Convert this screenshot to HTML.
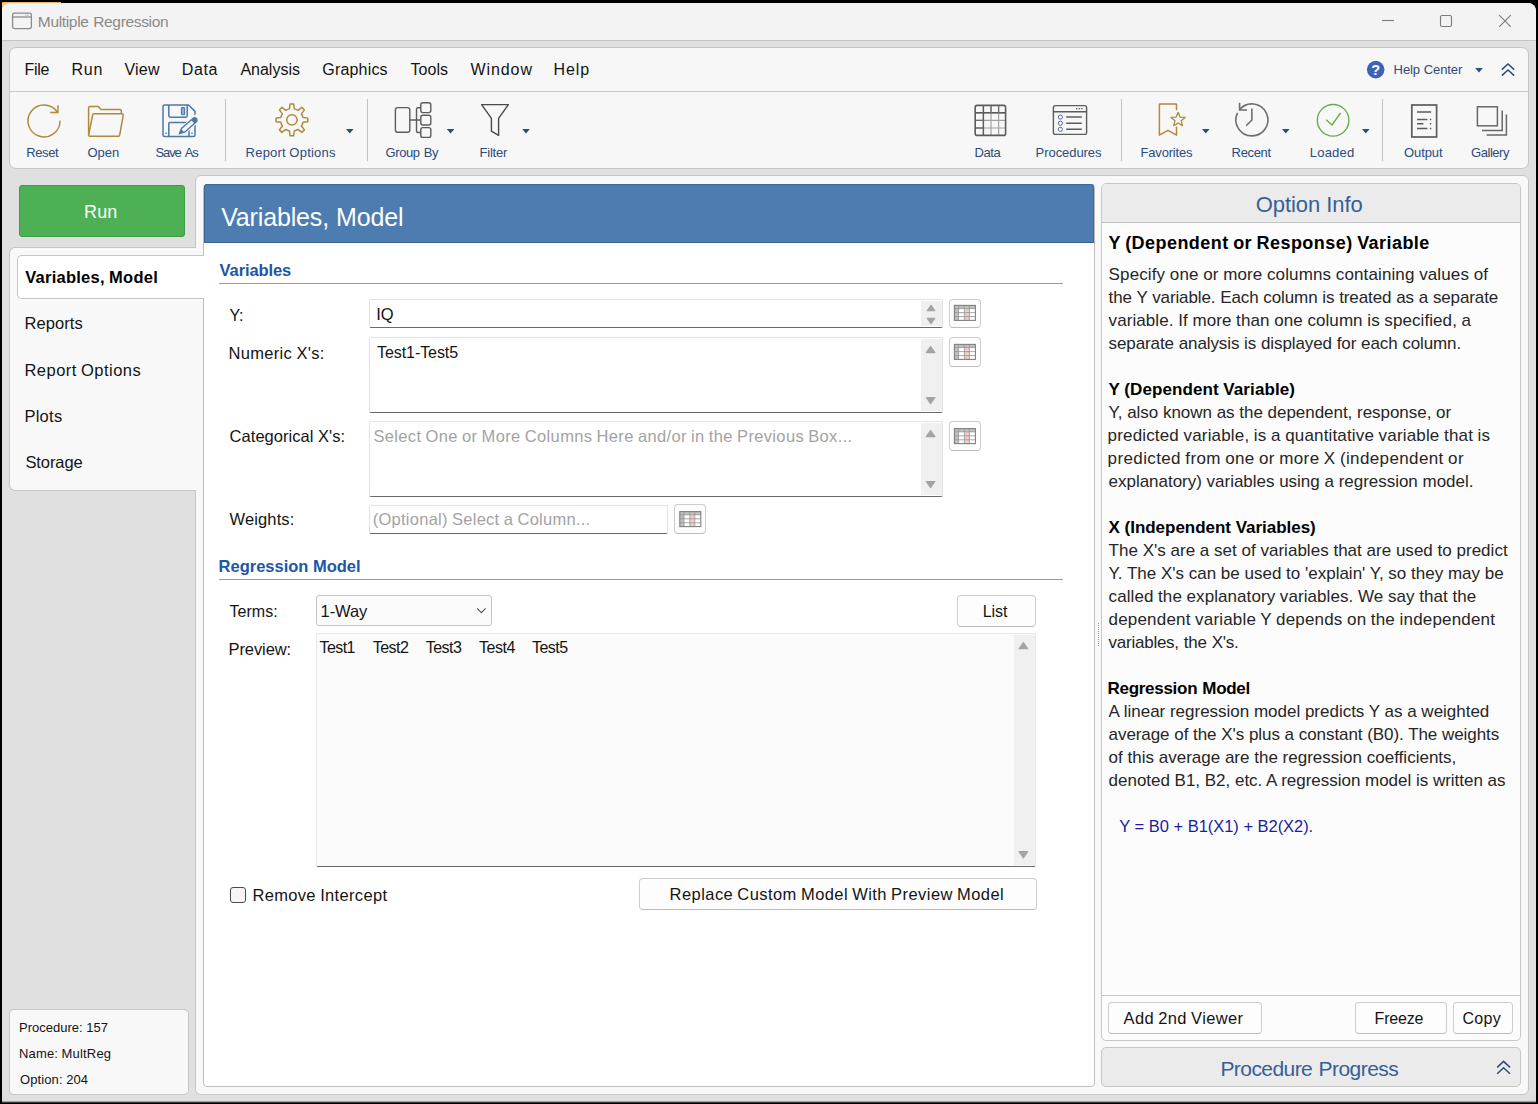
<!DOCTYPE html>
<html lang="en"><head><meta charset="utf-8"><title>Multiple Regression</title>
<style>
html,body{margin:0;padding:0}
body{width:1538px;height:1104px;background:#000;position:relative;overflow:hidden;font-family:"Liberation Sans", Arial, sans-serif}
.a{position:absolute;box-sizing:border-box}
.t{position:absolute;white-space:pre;margin:0;padding:0}

#win{position:absolute;left:2px;top:3px;width:1534px;height:1098px;background:#e0e0e0;border-radius:8px 8px 9px 9px;overflow:hidden}
#pg{position:absolute;left:-2px;top:-3px;width:1538px;height:1104px}
#titlebar{left:2px;top:2px;width:1534px;height:38px;background:#f3f3f3}
#titleline{left:2px;top:40px;width:1534px;height:1px;background:#c4c4c4}
#toolbar{left:9px;top:47px;width:1520px;height:122px;background:#f7f7f7;border:1px solid #c6c6c6;border-radius:7px}
#menusep{left:10px;top:91px;width:1518px;height:1px;background:#c9c9c9}
.vsep{width:1px;top:99px;height:62px;background:#c2c2c2}
#outer{left:195px;top:175px;width:1334px;height:920px;background:#f8f8f8;border:1px solid #c6c6c6;border-radius:6px}
#nav{left:9px;top:247px;width:187px;height:244px;background:#f8f8f8;border:1px solid #c6c6c6;border-right:none;border-radius:6px 0 0 6px}
#navfix{left:195px;top:248px;width:2px;height:242px;background:#f8f8f8}
#run{left:19px;top:185px;width:166px;height:52px;background:#4db054;border-radius:3px;border:1px solid #419a45}
#main{left:203px;top:184px;width:892px;height:903px;background:#fff;border:1px solid #bdbdbd;border-radius:4px}
#mainhead{left:204px;top:184px;width:890px;height:59px;background:#4d7cb0;border-radius:3px 3px 0 0;border:1px solid #3d6796;border-bottom:1px solid #3a628f}
#tab{left:17px;top:255px;width:187px;height:44px;background:#fff;border:1px solid #c6c6c6;border-right:none;border-radius:5px 0 0 5px}
.secline{left:219px;width:844px;height:1px;background:#78a0de}
.tb{background:#fff;border:1px solid #e2e2e2;border-bottom:1px solid #6a6a6a;border-radius:2px}
.sb{background:#f0f0f0}
.btn{background:#fdfdfd;border:1px solid #cdcdcd;border-bottom-color:#bcbcbc;border-radius:4px}
#combo{left:316px;top:595px;width:176px;height:31px;background:#fbfbfb;border:1px solid #c4c4c4;border-radius:3px}
#preview{left:316px;top:633px;width:720px;height:234px;background:#fbfbfb;border:1px solid #e8e8e8;border-bottom:1px solid #6a6a6a;border-radius:2px}
#chk{left:230px;top:887px;width:16px;height:16px;background:#f5f5f5;border:1px solid #4a4a4a;border-radius:3px}
#oinfo{left:1101px;top:183px;width:420px;height:858px;background:#fcfcfc;border:1px solid #c6c6c6;border-radius:5px}
#oinfohead{left:1102px;top:184px;width:418px;height:39px;background:#ebebeb;border-bottom:1px solid #c2c2c2;border-radius:4px 4px 0 0}
#oinfoline{left:1102px;top:995px;width:418px;height:1px;background:#c8c8c8}
#prog{left:1101px;top:1047px;width:420px;height:40px;background:#ebebeb;border:1px solid #c6c6c6;border-radius:5px}
#status{left:9px;top:1009px;width:180px;height:86px;background:#f8f8f8;border:1px solid #c6c6c6;border-radius:5px}
#botstrip{position:absolute;left:2px;top:1101px;width:1534px;height:2px;background:linear-gradient(#a0a0a0 50%,#3a3a3a 50%)}

</style></head>
<body>

<div id="botstrip"></div>
<div class="a" style="left:2px;top:1088px;width:1534px;height:13px;background:#dcdcdc"></div>
<div class="a" style="left:2px;top:2px;width:9px;height:9px;background:#f2c578"></div><div class="a" style="left:2px;top:2px;width:59px;height:1px;background:#e9b060"></div>
<div id="win"><div id="pg">
<div class="a" id="titlebar"></div>
<div class="a" id="titleline"></div>
<div class="a" id="toolbar"></div>
<div class="a" id="menusep"></div>
<div class="a vsep" style="left:225px"></div>
<div class="a vsep" style="left:367px"></div>
<div class="a vsep" style="left:1121px"></div>
<div class="a vsep" style="left:1382px"></div>
<div class="a" id="outer"></div>
<div class="a" id="nav"></div>
<div class="a" id="navfix"></div>
<div class="a" id="run"></div>
<div class="a" id="main"></div>
<div class="a" id="mainhead"></div>
<div class="a" id="tab"></div>
<div class="a secline" style="top:283px"></div>
<div class="a secline" style="top:579px"></div>

<div class="a tb" style="left:369px;top:299px;width:574px;height:29px"></div>
<div class="a sb" style="left:921px;top:301px;width:21px;height:25px"></div>
<div class="a tb" style="left:369px;top:337px;width:574px;height:76px"></div>
<div class="a sb" style="left:921px;top:339px;width:21px;height:72px"></div>
<div class="a tb" style="left:369px;top:421px;width:574px;height:76px"></div>
<div class="a sb" style="left:921px;top:423px;width:21px;height:72px"></div>
<div class="a tb" style="left:369px;top:505px;width:299px;height:29px"></div>
<div class="a btn" style="left:949px;top:299px;width:32px;height:29px"></div>
<div class="a btn" style="left:949px;top:337px;width:32px;height:30px"></div>
<div class="a btn" style="left:949px;top:421px;width:32px;height:30px"></div>
<div class="a btn" style="left:674px;top:504px;width:32px;height:30px"></div>
<div class="a" id="combo"></div>
<div class="a btn" style="left:957px;top:595px;width:79px;height:32px"></div>
<div class="a" id="preview"></div>
<div class="a sb" style="left:1014px;top:635px;width:21px;height:230px"></div>
<div class="a" id="chk"></div>
<div class="a btn" style="left:639px;top:878px;width:398px;height:32px"></div>

<div class="a" id="oinfo"></div>
<div class="a" id="oinfohead"></div>
<div class="a" id="oinfoline"></div>
<div class="a btn" style="left:1108px;top:1002px;width:154px;height:32px"></div>
<div class="a btn" style="left:1355px;top:1002px;width:92px;height:32px"></div>
<div class="a btn" style="left:1453px;top:1002px;width:60px;height:32px"></div>
<div class="a" id="prog"></div>
<div class="a" id="status"></div>
</div></div>

<svg class="a" style="left:0;top:0" width="1538" height="1104" viewBox="0 0 1538 1104">
<g fill="none" stroke="#8b8b8b" stroke-width="1.3"><rect x="12.6" y="13.2" width="18.8" height="15.4" rx="1.8"/><path d="M12.6 17H31.4"/></g>
<path d="M25.2 15.1h3.6" stroke="#9a9a9a" stroke-width="1" stroke-dasharray="1 0.6"/>
<g fill="none" stroke="#7c7c7c" stroke-width="1.1"><path d="M1382 20.5H1394"/><rect x="1440.5" y="15.5" width="11" height="11" rx="1.6"/><path d="M1499.2 15.2L1510.8 26.8M1510.8 15.2L1499.2 26.8"/></g>
<circle cx="1375.7" cy="69.6" r="8.8" fill="#3f63b4"/>
<path d="M1475.2 68h7.6l-3.8 4.4z" fill="#2c4a7c"/>
<path d="M1501.8 69.6L1508 63.9L1514.2 69.6M1501.8 75.6L1508 69.9L1514.2 75.6" fill="none" stroke="#2c4a7c" stroke-width="1.5"/>
<path d="M1497.2 1067.4L1503.6 1061.4L1510 1067.4M1497.2 1073.8L1503.6 1067.8L1510 1073.8" fill="none" stroke="#2c4a7c" stroke-width="1.5"/>
<g fill="none" stroke="#b08a3c" stroke-width="1.5"><path d="M57.64 112.54A16.0 16.0 0 1 0 60.00 120.62"/><path d="M57.94 105.14V112.54H50.24"/></g>
<g fill="none" stroke="#b08a3c" stroke-width="1.5" stroke-linejoin="round"><path d="M88.6 135V108Q88.6 106.5 90.1 106.5H98.5L100.8 109.4H119.8Q121.3 109.4 121.3 110.9V113.6"/><path d="M88.6 135Q88.6 136.2 89.8 136.2H118.4Q119.5 136.2 119.7 135.1L123.2 115.2Q123.5 113.8 122.1 113.8H94Q92.9 113.8 92.7 114.9L88.6 135"/></g>
<g fill="none" stroke="#4b79a8" stroke-width="1.5" stroke-linejoin="round"><path d="M164.6 105H188.6L195 111.4V135Q195 136.6 193.4 136.6H164.6Q163 136.6 163 135V106.6Q163 105 164.6 105Z"/><path d="M168.8 105V115.8Q168.8 117.2 170.2 117.2H185.8Q187.2 117.2 187.2 115.8V105"/><path d="M168.8 136.6V123.8Q168.8 122.4 170.2 122.4H187.6Q189 122.4 189 123.8V136.6"/><rect x="181.4" y="107.6" width="3.2" height="7.2" rx="0.8" fill="#8fb0d0" stroke-width="1.1"/></g>
<rect x="165.4" y="132.6" width="1.5" height="1.3" fill="#4b79a8"/><rect x="191.2" y="132.6" width="1.5" height="1.3" fill="#4b79a8"/>
<g transform="translate(179.3 133.7) rotate(-41.5)"><path d="M5 -4H25V4H5Z" fill="#f7f7f7"/><path d="M0 0L5 -2.4H19.6Q22.8 -2.4 22.8 0Q22.8 2.4 19.6 2.4H5Z" fill="#f7f7f7" stroke="#4b79a8" stroke-width="1.4" stroke-linejoin="round"/><path d="M18 -2.4H19.6Q22.8 -2.4 22.8 0Q22.8 2.4 19.6 2.4H18Z" fill="#4b79a8"/><path d="M0 0L4.6 -2.2V2.2Z" fill="#4b79a8"/></g>
<g fill="none" stroke="#b08a3c" stroke-width="1.5" stroke-linejoin="round"><path d="M289.45 108.87L290.12 104.00L293.68 104.00L294.35 108.87A11.3 11.3 0 0 1 297.97 110.37L301.88 107.40L304.40 109.92L301.43 113.83A11.3 11.3 0 0 1 302.93 117.45L307.80 118.12L307.80 121.68L302.93 122.35A11.3 11.3 0 0 1 301.43 125.97L304.40 129.88L301.88 132.40L297.97 129.43A11.3 11.3 0 0 1 294.35 130.93L293.68 135.80L290.12 135.80L289.45 130.93A11.3 11.3 0 0 1 285.83 129.43L281.92 132.40L279.40 129.88L282.37 125.97A11.3 11.3 0 0 1 280.87 122.35L276.00 121.68L276.00 118.12L280.87 117.45A11.3 11.3 0 0 1 282.37 113.83L279.40 109.92L281.92 107.40L285.83 110.37A11.3 11.3 0 0 1 289.45 108.87Z"/><circle cx="291.9" cy="119.9" r="5.2"/></g>
<path d="M346 129h7.6l-3.8 4.4z" fill="#2c4a7c"/>
<g fill="none" stroke="#5c5c5c" stroke-width="1.4"><rect x="395.4" y="107.6" width="14.4" height="24.6" rx="2.2"/><rect x="420.8" y="102.8" width="10" height="9.8" rx="2"/><rect x="420.8" y="115.2" width="10" height="9.8" rx="2"/><rect x="420.8" y="127.6" width="10" height="9.8" rx="2"/><path d="M409.8 120H420.8M420.8 107.7H418Q416.5 107.7 416.5 109.2V131Q416.5 132.5 418 132.5H420.8"/></g>
<path d="M446.8 129h7.6l-3.8 4.4z" fill="#2c4a7c"/>
<path d="M481.6 104.6H508.4L498.6 118.4V135.4L491.4 131.2V118.4Z" fill="none" stroke="#4a4a4a" stroke-width="1.4" stroke-linejoin="round"/>
<path d="M522.2 129h7.6l-3.8 4.4z" fill="#2c4a7c"/>
<g fill="none"><path d="M975.2 112.8H1005.6M975.2 120.4H1005.6M975.2 128H1005.6M983.4 105.4V135.4M991 105.4V135.4M998.6 105.4V135.4" stroke="#a2a2a2" stroke-width="1.2"/><path d="M975.2 112.8H1005.6M983.4 105.4V135.4" stroke="#5c5c5c" stroke-width="1.4"/><path d="M991 105.4V112.8M998.6 105.4V112.8M975.2 120.4H983.4M975.2 128H983.4" stroke="#6e6e6e" stroke-width="1.3"/><rect x="975.2" y="105.4" width="30.4" height="30" rx="2" stroke="#5c5c5c" stroke-width="1.6"/></g>
<g fill="none" stroke="#5c5c5c" stroke-width="1.4"><rect x="1053.4" y="105.6" width="33.2" height="28.8" rx="2"/><path d="M1053.4 111.8H1086.6"/><path d="M1066.2 117.1H1081.8M1066.2 123.2H1081.8M1066.2 129.3H1081.8" stroke-width="1.5"/></g>
<g fill="none" stroke="#5c69a2" stroke-width="1"><circle cx="1060.4" cy="117.1" r="2.1"/><circle cx="1060.4" cy="123.2" r="2.1"/><circle cx="1060.4" cy="129.3" r="2.1"/></g>
<path d="M1076 108.6h7" stroke="#5c5c5c" stroke-width="1.2" stroke-dasharray="1.4 1.2"/>
<g fill="none" stroke="#b08a3c" stroke-width="1.5" stroke-linejoin="round"><path d="M1176.5 110.3V104.6Q1176.5 104 1175.9 104H1160Q1159.4 104 1159.4 104.6V135.2L1168 130.3L1176.5 135.2V126.8"/><path d="M1178.10 112.30L1180.04 117.03L1185.14 117.41L1181.24 120.72L1182.45 125.69L1178.10 123.00L1173.75 125.69L1174.96 120.72L1171.06 117.41L1176.16 117.03Z" stroke-width="1.3"/></g>
<path d="M1202 129h7.6l-3.8 4.4z" fill="#2c4a7c"/>
<g fill="none" stroke="#6c6f6a" stroke-width="1.6"><path d="M1239.47 109.83A16.0 16.0 0 1 1 1237.52 112.89"/><path d="M1239.60 102.80V110.00H1247.00"/><path d="M1251.9 108.4V120L1246.2 125.7"/></g>
<path d="M1282 129h7.6l-3.8 4.4z" fill="#2c4a7c"/>
<g fill="none" stroke="#6aab52" stroke-width="1.4"><circle cx="1333.1" cy="120.3" r="15.8"/><path d="M1326.2 119.8L1332 125L1340.6 113"/></g>
<path d="M1362 129h7.6l-3.8 4.4z" fill="#2c4a7c"/>
<g fill="none" stroke="#5c5c5c"><rect x="1411.8" y="105" width="24.8" height="32" stroke-width="1.7"/><path d="M1417 112H1431.2M1417 119.4H1427.4M1417 123.8H1423.4M1417 128.4H1427.4" stroke-width="1.5"/><path d="M1429.8 119.4h1.5M1429.8 123.8h1.5M1429.8 128.4h1.5" stroke-width="1.5"/></g>
<g fill="none" stroke="#686868" stroke-width="1.5"><rect x="1477.4" y="106.8" width="20" height="19"/><path d="M1502.2 110.4V130.4H1482M1506.4 114.6V135H1486.6"/></g>
<g transform="translate(954.4 305.4)"><rect x="0" y="0" width="21" height="15" fill="#fff"/><rect x="0" y="0" width="21" height="3.2" fill="#c0c0c0"/><rect x="0" y="0" width="4.2" height="15" fill="#c0c0c0"/><rect x="10.2" y="3.2" width="4.6" height="11.8" fill="#f3caca"/><path d="M0 3.2H21M0 7.2H21M0 11.2H21M4.2 0V15M10 0V15M15 0V15" stroke="#949494" stroke-width="0.8" fill="none"/><rect x="0" y="0" width="21" height="15" fill="none" stroke="#808080" stroke-width="1.1"/></g>
<g transform="translate(954.4 344.4)"><rect x="0" y="0" width="21" height="15" fill="#fff"/><rect x="0" y="0" width="21" height="3.2" fill="#c0c0c0"/><rect x="0" y="0" width="4.2" height="15" fill="#c0c0c0"/><rect x="10.2" y="3.2" width="4.6" height="11.8" fill="#f3caca"/><path d="M0 3.2H21M0 7.2H21M0 11.2H21M4.2 0V15M10 0V15M15 0V15" stroke="#949494" stroke-width="0.8" fill="none"/><rect x="0" y="0" width="21" height="15" fill="none" stroke="#808080" stroke-width="1.1"/></g>
<g transform="translate(954.4 428.6)"><rect x="0" y="0" width="21" height="15" fill="#fff"/><rect x="0" y="0" width="21" height="3.2" fill="#c0c0c0"/><rect x="0" y="0" width="4.2" height="15" fill="#c0c0c0"/><rect x="10.2" y="3.2" width="4.6" height="11.8" fill="#f3caca"/><path d="M0 3.2H21M0 7.2H21M0 11.2H21M4.2 0V15M10 0V15M15 0V15" stroke="#949494" stroke-width="0.8" fill="none"/><rect x="0" y="0" width="21" height="15" fill="none" stroke="#808080" stroke-width="1.1"/></g>
<g transform="translate(679.8 511.6)"><rect x="0" y="0" width="21" height="15" fill="#fff"/><rect x="0" y="0" width="21" height="3.2" fill="#c0c0c0"/><rect x="0" y="0" width="4.2" height="15" fill="#c0c0c0"/><rect x="10.2" y="3.2" width="4.6" height="11.8" fill="#f3caca"/><path d="M0 3.2H21M0 7.2H21M0 11.2H21M4.2 0V15M10 0V15M15 0V15" stroke="#949494" stroke-width="0.8" fill="none"/><rect x="0" y="0" width="21" height="15" fill="none" stroke="#808080" stroke-width="1.1"/></g>
<path d="M927.3 310.7L931 305.3L934.7 310.7Z" fill="#a4a4a4" stroke="#a4a4a4" stroke-width="1.2" stroke-linejoin="round"/>
<path d="M927.3 318.3L931 323.7L934.7 318.3Z" fill="#a4a4a4" stroke="#a4a4a4" stroke-width="1.2" stroke-linejoin="round"/>
<path d="M926.3000000000001 352.70000000000005L930.6 346.5L934.9 352.70000000000005Z" fill="#a4a4a4" stroke="#a4a4a4" stroke-width="1.2" stroke-linejoin="round"/>
<path d="M926.3000000000001 397.5L930.6 403.70000000000005L934.9 397.5Z" fill="#a4a4a4" stroke="#a4a4a4" stroke-width="1.2" stroke-linejoin="round"/>
<path d="M926.3000000000001 436.70000000000005L930.6 430.5L934.9 436.70000000000005Z" fill="#a4a4a4" stroke="#a4a4a4" stroke-width="1.2" stroke-linejoin="round"/>
<path d="M926.3000000000001 481.5L930.6 487.70000000000005L934.9 481.5Z" fill="#a4a4a4" stroke="#a4a4a4" stroke-width="1.2" stroke-linejoin="round"/>
<path d="M1019.1 648.7L1023.4 642.5L1027.7 648.7Z" fill="#a4a4a4" stroke="#a4a4a4" stroke-width="1.2" stroke-linejoin="round"/>
<path d="M1019.1 851.6999999999999L1023.4 857.9L1027.7 851.6999999999999Z" fill="#a4a4a4" stroke="#a4a4a4" stroke-width="1.2" stroke-linejoin="round"/>
<path d="M477.2 608.4L481.4 612.6L485.6 608.4" fill="none" stroke="#555" stroke-width="1.1"/>
<path d="M1098.5 623V647" stroke="#9a9a9a" stroke-width="1" stroke-dasharray="1 1"/>
<text x="1375.7" y="74.6" font-family="Liberation Sans, Arial, sans-serif" font-size="14.5" font-weight="700" fill="#fff" text-anchor="middle">?</text>
</svg>
<div id="txt">
<div class="t" style="left:37.80px;top:11.00px;font-size:15.5px;line-height:22px;color:#898989;letter-spacing:-0.331px;word-spacing:0.662px">Multiple Regression</div>
<div class="t" style="left:24.40px;top:59.00px;font-size:16px;line-height:22px;color:#141414;letter-spacing:-0.228px">File</div>
<div class="t" style="left:71.60px;top:59.00px;font-size:16px;line-height:22px;color:#141414;letter-spacing:0.673px">Run</div>
<div class="t" style="left:124.40px;top:59.00px;font-size:16px;line-height:22px;color:#141414;letter-spacing:0.255px">View</div>
<div class="t" style="left:181.80px;top:59.00px;font-size:16px;line-height:22px;color:#141414;letter-spacing:0.567px">Data</div>
<div class="t" style="left:240.40px;top:59.00px;font-size:16px;line-height:22px;color:#141414;letter-spacing:0.003px">Analysis</div>
<div class="t" style="left:322.30px;top:59.00px;font-size:16px;line-height:22px;color:#141414;letter-spacing:0.182px">Graphics</div>
<div class="t" style="left:410.60px;top:59.00px;font-size:16px;line-height:22px;color:#141414;letter-spacing:0.012px">Tools</div>
<div class="t" style="left:470.60px;top:59.00px;font-size:16px;line-height:22px;color:#141414;letter-spacing:0.890px">Window</div>
<div class="t" style="left:553.60px;top:59.00px;font-size:16px;line-height:22px;color:#141414;letter-spacing:0.864px">Help</div>
<div class="t" style="left:1393.60px;top:61.00px;font-size:13px;line-height:18px;color:#2c4a7c;letter-spacing:-0.080px;word-spacing:0.160px">Help Center</div>
<div class="t" style="left:26.30px;top:144.00px;font-size:13px;line-height:18px;color:#2c4a7c;letter-spacing:-0.412px">Reset</div>
<div class="t" style="left:87.50px;top:144.00px;font-size:13px;line-height:18px;color:#2c4a7c;letter-spacing:-0.024px">Open</div>
<div class="t" style="left:155.50px;top:144.00px;font-size:13px;line-height:18px;color:#2c4a7c;letter-spacing:-1.103px;word-spacing:2.207px">Save As</div>
<div class="t" style="left:245.60px;top:144.00px;font-size:13px;line-height:18px;color:#2c4a7c;letter-spacing:0.224px;word-spacing:-0.449px">Report Options</div>
<div class="t" style="left:385.50px;top:144.00px;font-size:13px;line-height:18px;color:#2c4a7c;letter-spacing:-0.383px;word-spacing:0.765px">Group By</div>
<div class="t" style="left:479.60px;top:144.00px;font-size:13px;line-height:18px;color:#2c4a7c;letter-spacing:-0.232px">Filter</div>
<div class="t" style="left:974.60px;top:144.00px;font-size:13px;line-height:18px;color:#2c4a7c;letter-spacing:-0.443px">Data</div>
<div class="t" style="left:1035.60px;top:144.00px;font-size:13px;line-height:18px;color:#2c4a7c;letter-spacing:-0.064px">Procedures</div>
<div class="t" style="left:1140.60px;top:144.00px;font-size:13px;line-height:18px;color:#2c4a7c;letter-spacing:-0.195px">Favorites</div>
<div class="t" style="left:1231.60px;top:144.00px;font-size:13px;line-height:18px;color:#2c4a7c;letter-spacing:-0.336px">Recent</div>
<div class="t" style="left:1309.80px;top:144.00px;font-size:13px;line-height:18px;color:#2c4a7c;letter-spacing:0.210px">Loaded</div>
<div class="t" style="left:1404.00px;top:144.00px;font-size:13px;line-height:18px;color:#2c4a7c;letter-spacing:-0.083px">Output</div>
<div class="t" style="left:1471.00px;top:144.00px;font-size:13px;line-height:18px;color:#2c4a7c;letter-spacing:-0.446px">Gallery</div>
<div class="t" style="left:84.00px;top:200.00px;font-size:18px;line-height:25px;color:#ffffff;letter-spacing:0.145px">Run</div>
<div class="t" style="left:25.20px;top:266.00px;font-size:16.5px;line-height:23px;color:#000000;letter-spacing:0.253px;word-spacing:-0.505px;font-weight:700">Variables, Model</div>
<div class="t" style="left:24.40px;top:312.00px;font-size:16.5px;line-height:23px;color:#141414;letter-spacing:0.096px">Reports</div>
<div class="t" style="left:24.40px;top:359.00px;font-size:16.5px;line-height:23px;color:#141414;letter-spacing:0.489px;word-spacing:-0.978px">Report Options</div>
<div class="t" style="left:24.40px;top:405.00px;font-size:16.5px;line-height:23px;color:#141414;letter-spacing:0.267px">Plots</div>
<div class="t" style="left:25.40px;top:451.00px;font-size:16.5px;line-height:23px;color:#141414;letter-spacing:-0.086px">Storage</div>
<div class="t" style="left:19.00px;top:1019.00px;font-size:13px;line-height:18px;color:#141414;letter-spacing:0.003px;word-spacing:-0.007px">Procedure: 157</div>
<div class="t" style="left:19.00px;top:1045.00px;font-size:13px;line-height:18px;color:#141414;letter-spacing:0.172px;word-spacing:-0.344px">Name: MultReg</div>
<div class="t" style="left:20.00px;top:1071.00px;font-size:13px;line-height:18px;color:#141414;letter-spacing:0.102px;word-spacing:-0.204px">Option: 204</div>
<div class="t" style="left:221.20px;top:200.00px;font-size:25px;line-height:35px;color:#ffffff;letter-spacing:-0.154px;word-spacing:0.307px">Variables, Model</div>
<div class="t" style="left:219.60px;top:259.00px;font-size:16.5px;line-height:23px;color:#1c56a6;letter-spacing:-0.112px;font-weight:700">Variables</div>
<div class="t" style="left:229.60px;top:305.00px;font-size:16px;line-height:22px;color:#141414;letter-spacing:-0.389px">Y:</div>
<div class="t" style="left:376.20px;top:303.00px;font-size:16.5px;line-height:23px;color:#141414;letter-spacing:-0.084px">IQ</div>
<div class="t" style="left:228.60px;top:342.00px;font-size:16.5px;line-height:23px;color:#141414;letter-spacing:0.298px;word-spacing:-0.597px">Numeric X's:</div>
<div class="t" style="left:377.00px;top:342.00px;font-size:16px;line-height:22px;color:#141414;letter-spacing:-0.071px">Test1-Test5</div>
<div class="t" style="left:229.60px;top:425.00px;font-size:16.5px;line-height:23px;color:#141414;letter-spacing:0.035px;word-spacing:-0.069px">Categorical X's:</div>
<div class="t" style="left:373.40px;top:425.00px;font-size:16.5px;line-height:23px;color:#a3a3a3;letter-spacing:0.345px;word-spacing:-0.691px">Select One or More Columns Here and/or in the Previous Box...</div>
<div class="t" style="left:229.60px;top:508.00px;font-size:16.5px;line-height:23px;color:#141414;letter-spacing:0.114px">Weights:</div>
<div class="t" style="left:372.80px;top:508.00px;font-size:16.5px;line-height:23px;color:#a3a3a3;letter-spacing:0.247px;word-spacing:-0.495px">(Optional) Select a Column...</div>
<div class="t" style="left:218.60px;top:555.00px;font-size:16.5px;line-height:23px;color:#1c56a6;letter-spacing:-0.010px;word-spacing:0.020px;font-weight:700">Regression Model</div>
<div class="t" style="left:229.60px;top:601.00px;font-size:16px;line-height:22px;color:#141414;letter-spacing:0.009px">Terms:</div>
<div class="t" style="left:320.60px;top:600.00px;font-size:16.5px;line-height:23px;color:#141414;letter-spacing:-0.102px">1-Way</div>
<div class="t" style="left:228.60px;top:638.00px;font-size:16.5px;line-height:23px;color:#141414;letter-spacing:-0.112px">Preview:</div>
<div class="t" style="left:319.60px;top:637.00px;font-size:16px;line-height:22px;color:#141414;letter-spacing:-0.611px">Test1</div>
<div class="t" style="left:372.70px;top:637.00px;font-size:16px;line-height:22px;color:#141414;letter-spacing:-0.511px">Test2</div>
<div class="t" style="left:425.80px;top:637.00px;font-size:16px;line-height:22px;color:#141414;letter-spacing:-0.536px">Test3</div>
<div class="t" style="left:478.90px;top:637.00px;font-size:16px;line-height:22px;color:#141414;letter-spacing:-0.436px">Test4</div>
<div class="t" style="left:532.00px;top:637.00px;font-size:16px;line-height:22px;color:#141414;letter-spacing:-0.536px">Test5</div>
<div class="t" style="left:982.70px;top:601.00px;font-size:16px;line-height:22px;color:#141414;letter-spacing:-0.084px">List</div>
<div class="t" style="left:252.40px;top:884.00px;font-size:16.5px;line-height:23px;color:#141414;letter-spacing:0.343px;word-spacing:-0.686px">Remove Intercept</div>
<div class="t" style="left:669.60px;top:883.00px;font-size:16.5px;line-height:23px;color:#141414;letter-spacing:0.436px;word-spacing:-0.871px">Replace Custom Model With Preview Model</div>
<div class="t" style="left:1255.80px;top:189.00px;font-size:22px;line-height:31px;color:#365f98;letter-spacing:-0.099px;word-spacing:0.198px">Option Info</div>
<div class="t" style="left:1108.50px;top:231.00px;font-size:18px;line-height:25px;color:#000000;letter-spacing:0.441px;word-spacing:-0.883px;font-weight:700">Y (Dependent or Response) Variable</div>
<div class="t" style="left:1108.60px;top:263.00px;font-size:17px;line-height:24px;color:#262626;letter-spacing:0.127px;word-spacing:-0.253px">Specify one or more columns containing values of</div>
<div class="t" style="left:1108.60px;top:286.00px;font-size:17px;line-height:24px;color:#262626;letter-spacing:-0.115px;word-spacing:0.230px">the Y variable. Each column is treated as a separate</div>
<div class="t" style="left:1108.60px;top:309.00px;font-size:17px;line-height:24px;color:#262626;letter-spacing:0.076px;word-spacing:-0.152px">variable. If more than one column is specified, a</div>
<div class="t" style="left:1108.60px;top:332.00px;font-size:17px;line-height:24px;color:#262626;letter-spacing:-0.107px;word-spacing:0.213px">separate analysis is displayed for each column.</div>
<div class="t" style="left:1108.50px;top:378.00px;font-size:17px;line-height:24px;color:#000000;letter-spacing:0.094px;word-spacing:-0.189px;font-weight:700">Y (Dependent Variable)</div>
<div class="t" style="left:1108.60px;top:401.00px;font-size:17px;line-height:24px;color:#262626;letter-spacing:-0.039px;word-spacing:0.079px">Y, also known as the dependent, response, or</div>
<div class="t" style="left:1107.60px;top:424.00px;font-size:17px;line-height:24px;color:#262626;letter-spacing:0.162px;word-spacing:-0.323px">predicted variable, is a quantitative variable that is</div>
<div class="t" style="left:1107.60px;top:447.00px;font-size:17px;line-height:24px;color:#262626;letter-spacing:0.381px;word-spacing:-0.762px">predicted from one or more X (independent or</div>
<div class="t" style="left:1108.60px;top:470.00px;font-size:17px;line-height:24px;color:#262626;letter-spacing:-0.023px;word-spacing:0.047px">explanatory) variables using a regression model.</div>
<div class="t" style="left:1108.50px;top:516.00px;font-size:17px;line-height:24px;color:#000000;letter-spacing:-0.028px;word-spacing:0.057px;font-weight:700">X (Independent Variables)</div>
<div class="t" style="left:1108.60px;top:539.00px;font-size:17px;line-height:24px;color:#262626;letter-spacing:0.025px;word-spacing:-0.049px">The X's are a set of variables that are used to predict</div>
<div class="t" style="left:1108.60px;top:562.00px;font-size:17px;line-height:24px;color:#262626;letter-spacing:0.001px;word-spacing:-0.002px">Y. The X's can be used to 'explain' Y, so they may be</div>
<div class="t" style="left:1108.60px;top:585.00px;font-size:17px;line-height:24px;color:#262626;letter-spacing:0.069px;word-spacing:-0.139px">called the explanatory variables. We say that the</div>
<div class="t" style="left:1108.60px;top:608.00px;font-size:17px;line-height:24px;color:#262626;letter-spacing:0.176px;word-spacing:-0.352px">dependent variable Y depends on the independent</div>
<div class="t" style="left:1108.60px;top:631.00px;font-size:17px;line-height:24px;color:#262626;letter-spacing:-0.251px;word-spacing:0.503px">variables, the X's.</div>
<div class="t" style="left:1107.50px;top:677.00px;font-size:17px;line-height:24px;color:#000000;letter-spacing:-0.284px;word-spacing:0.568px;font-weight:700">Regression Model</div>
<div class="t" style="left:1108.60px;top:700.00px;font-size:17px;line-height:24px;color:#262626;letter-spacing:-0.013px;word-spacing:0.027px">A linear regression model predicts Y as a weighted</div>
<div class="t" style="left:1108.60px;top:723.00px;font-size:17px;line-height:24px;color:#262626;letter-spacing:-0.079px;word-spacing:0.158px">average of the X's plus a constant (B0). The weights</div>
<div class="t" style="left:1108.60px;top:746.00px;font-size:17px;line-height:24px;color:#262626;letter-spacing:0.008px;word-spacing:-0.016px">of this average are the regression coefficients,</div>
<div class="t" style="left:1108.60px;top:769.00px;font-size:17px;line-height:24px;color:#262626;letter-spacing:-0.027px;word-spacing:0.053px">denoted B1, B2, etc. A regression model is written as</div>
<div class="t" style="left:1119.30px;top:815.00px;font-size:16.5px;line-height:23px;color:#1c1c9c;letter-spacing:-0.059px;word-spacing:0.118px">Y = B0 + B1(X1) + B2(X2).</div>
<div class="t" style="left:1123.60px;top:1007.00px;font-size:16.5px;line-height:23px;color:#141414;letter-spacing:0.356px;word-spacing:-0.712px">Add 2nd Viewer</div>
<div class="t" style="left:1374.60px;top:1008.00px;font-size:16px;line-height:22px;color:#141414;letter-spacing:-0.200px">Freeze</div>
<div class="t" style="left:1462.40px;top:1008.00px;font-size:16px;line-height:22px;color:#141414;letter-spacing:0.316px">Copy</div>
<div class="t" style="left:1220.40px;top:1054.00px;font-size:21px;line-height:29px;color:#365f98;letter-spacing:-0.564px;word-spacing:1.127px">Procedure Progress</div>
</div>
</body></html>
